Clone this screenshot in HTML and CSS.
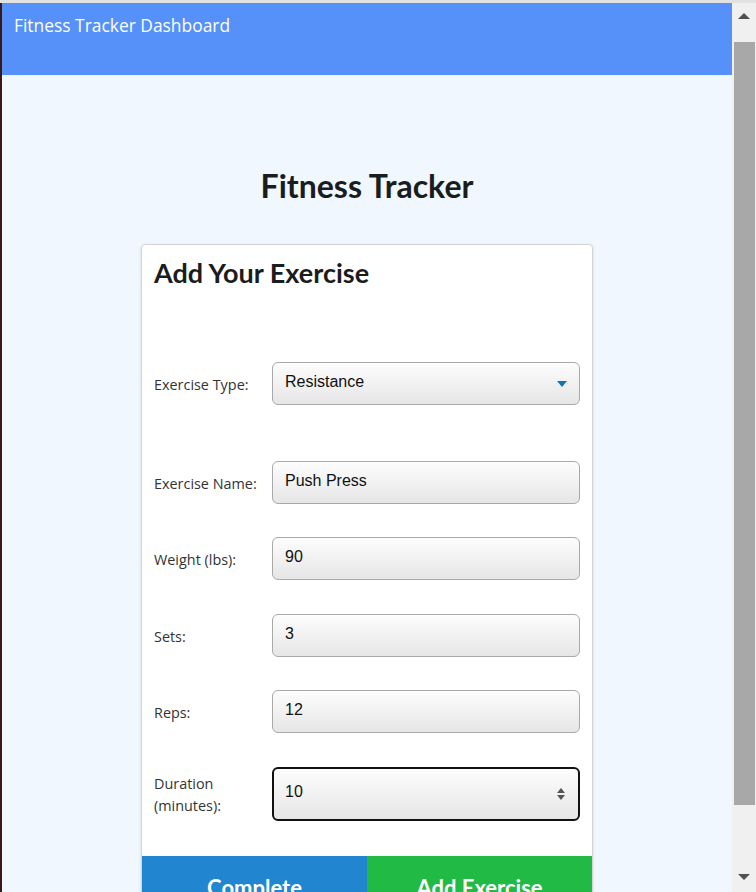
FILE: index.html
```html
<!DOCTYPE html>
<html lang="en">
<head>
  <meta charset="UTF-8" />
  <title>Fitness Tracker Dashboard</title>
  <link rel="stylesheet" href="styles.css">
</head>
<body>
  <div class="window">
    <div class="edge"></div>

    <div class="page">
      <header class="topbar">Fitness Tracker Dashboard</header>

      <main class="main">
        <h1 class="title">Fitness Tracker</h1>

        <form class="card">
          <h2 class="card-title">Add Your Exercise</h2>

          <div class="field field-type">
            <label for="type">Exercise Type:</label>
            <div class="control select-wrap">
              <select id="type" class="input">
                <option>Resistance</option>
                <option>Cardio</option>
              </select>
              <span class="caret"></span>
            </div>
          </div>

          <div class="field">
            <label for="name">Exercise Name:</label>
            <input id="name" class="input" type="text" value="Push Press">
          </div>

          <div class="field">
            <label for="weight">Weight (lbs):</label>
            <input id="weight" class="input" type="text" value="90">
          </div>

          <div class="field">
            <label for="sets">Sets:</label>
            <input id="sets" class="input" type="text" value="3">
          </div>

          <div class="field">
            <label for="reps">Reps:</label>
            <input id="reps" class="input" type="text" value="12">
          </div>

          <div class="field field-last">
            <label for="duration">Duration<br>(minutes):</label>
            <div class="control spin-wrap">
              <input id="duration" class="input input-focus" type="text" value="10">
              <span class="spinner">
                <span class="spin-up"></span>
                <span class="spin-down"></span>
              </span>
            </div>
          </div>

          <div class="actions">
            <button type="button" class="btn btn-blue">Complete</button>
            <button type="button" class="btn btn-green">Add Exercise</button>
          </div>
        </form>
      </main>
    </div>

    <!-- scrollbar of the captured window -->
    <div class="scrollbar">
      <div class="sb-btn sb-btn-top"><span class="sb-up"></span></div>
      <div class="sb-thumb"></div>
      <div class="sb-rest">
        <div class="sb-btn"><span class="sb-down"></span></div>
      </div>
    </div>
  </div>
</body>
</html>
```

FILE: styles.css
```css
* {
  margin: 0;
  padding: 0;
  box-sizing: border-box;
}

body {
  width: 756px;
  height: 892px;
  overflow: hidden;
  background: #dcdcdc;
  font-family: "Open Sans", "Noto Sans", sans-serif;
}

.window {
  display: flex;
  height: 892px;
  border-top: 3px solid #e2e2e2;
}

.edge {
  width: 2px;
  background: #3b1717;
}

.page {
  flex: 1;
  overflow: hidden;
  background: #f0f7ff;
}

/* header bar */
.topbar {
  height: 72px;
  padding: 10px 12px;
  background: #5591f9;
  color: #fff;
  font-size: 17.4px;
  line-height: 25px;
}

.main {
  padding-top: 92px;
}

.title {
  text-align: center;
  font-family: Lato, sans-serif;
  font-size: 32px;
  font-weight: 700;
  line-height: 1.2;
  color: #1b1c1d;
  margin-bottom: 39px;
}

/* card */
.card {
  width: 452px;
  margin: 0 auto;
  background: #fff;
  border: 1px solid #d4d4d5;
  border-radius: 4px;
  box-shadow: 0 1px 3px rgba(0,0,0,0.12);
  overflow: hidden;
}

.card-title {
  font-family: Lato, sans-serif;
  font-size: 27px;
  font-weight: 700;
  line-height: 1.2;
  color: #1b1c1d;
  padding: 12px 12px 0;
  margin-bottom: 72px;
}

.field {
  display: flex;
  align-items: center;
  padding: 0 12px;
  margin-bottom: 33.5px;
}

.field-type {
  margin-bottom: 56px;
}

.field-last {
  margin-bottom: 35px;
}

.field label {
  width: 118px;
  flex-shrink: 0;
  padding-top: 3px;
  font-size: 14.4px;
  line-height: 22px;
  color: #333;
}

.control {
  position: relative;
  flex: 1;
}

.input {
  display: block;
  width: 100%;
  height: 43px;
  padding: 0 12px 3px;
  border: 1px solid #a9a9a9;
  border-radius: 6px;
  background: linear-gradient(#fdfdfd, #e6e6e6);
  font-family: "Liberation Sans", Arial, sans-serif;
  font-size: 16px;
  color: #111;
  outline: none;
  -webkit-appearance: none;
  appearance: none;
}

.input-focus {
  height: 54px;
  border: 2px solid #111;
  padding-left: 11px;
}

.caret {
  position: absolute;
  right: 13px;
  top: 19px;
  border-left: 5px solid transparent;
  border-right: 5px solid transparent;
  border-top: 6px solid #0f76b0;
}

.spinner {
  position: absolute;
  right: 15px;
  top: 21px;
  display: flex;
  flex-direction: column;
  gap: 2px;
}

.spin-up,
.spin-down {
  border-left: 4px solid transparent;
  border-right: 4px solid transparent;
}

.spin-up {
  border-bottom: 5px solid #555;
}

.spin-down {
  border-top: 5px solid #555;
}

/* buttons */
.actions {
  display: flex;
}

.btn {
  flex: 1;
  padding: 19px 0 16px;
  border: none;
  color: #fff;
  font-family: Lato, sans-serif;
  font-size: 22px;
  font-weight: 700;
  line-height: 1.2;
  cursor: pointer;
}

.btn-blue {
  background: #2185d0;
}

.btn-green {
  background: #21ba45;
}

/* scrollbar */
.scrollbar {
  width: 24px;
  display: flex;
  flex-direction: column;
  background: #f0f0f0;
}

.sb-btn {
  height: 30px;
  display: flex;
  align-items: center;
  justify-content: center;
}

.sb-btn-top {
  height: 26px;
}

.sb-up {
  border-left: 6px solid transparent;
  border-right: 6px solid transparent;
  border-bottom: 6px solid #505050;
}

.sb-down {
  border-left: 6px solid transparent;
  border-right: 6px solid transparent;
  border-top: 6px solid #505050;
}

.sb-thumb {
  height: 763px;
  margin: 13px 1px 0 2px;
  background: #a8a8a8;
}

.sb-rest {
  flex: 1;
  display: flex;
  flex-direction: column;
  justify-content: flex-end;
}
```
